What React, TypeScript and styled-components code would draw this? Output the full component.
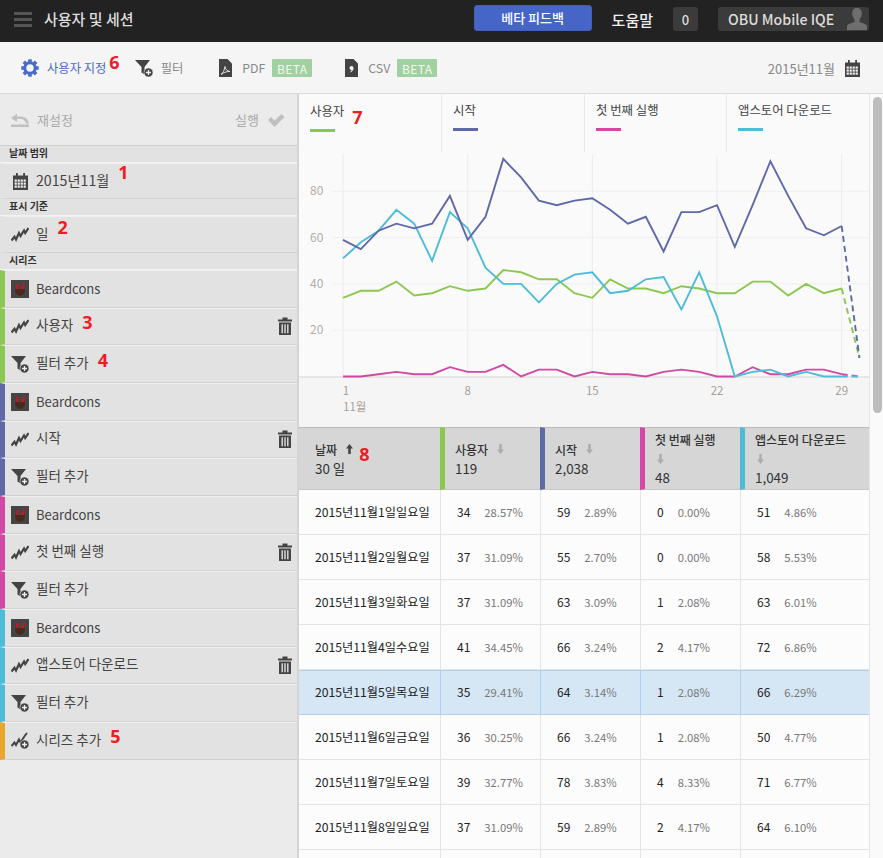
import React from "react";
import styled, { createGlobalStyle } from "styled-components";

const FONT = `"Noto Sans CJK KR", "Noto Sans", sans-serif`;

const Global = createGlobalStyle`
  html, body { margin: 0; padding: 0; height: 858px; overflow: hidden; background: #fafafa; }
  body { font-family: ${FONT}; }
  * { box-sizing: border-box; }
`;

const GREEN = "#8cc751";
const PURPLE = "#5f69a8";
const PINK = "#d148a5";
const CYAN = "#4dbcd9";
const ORANGE = "#e9a62c";

const Page = styled.div`
  width: 883px; height: 858px; overflow: hidden;
  display: flex; flex-direction: column;
`;
const TopBar = styled.header`
  height: 42px; flex: none; background: #222; color: #ddd;
  display: flex; align-items: center; padding: 0 14px;
`;
const Burger = styled.span`
  width: 18px; height: 15px; flex: none; margin-top: -3px;
  border-top: 3px solid #555; border-bottom: 3px solid #555;
  display: flex; align-items: center;
  &::before { content: ""; display: block; width: 100%; height: 3px; background: #555; }
`;
const Title = styled.h1`
  margin: 0 0 0 12px; font-size: 15px; font-weight: 500; color: #ddd; flex: 1; position: relative; top: -3px;
`;
const FeedbackButton = styled.button`
  width: 118px; height: 26px; margin-top: -6px; border: 1px solid #4060b8; border-radius: 3px;
  background: #4566c6; color: #fff; font: 500 13px ${FONT}; padding: 0 0 2px;
`;
const HelpLink = styled.span`
  margin: -4px 20px 0 20px; font-size: 15px; font-weight: 500; color: #eee;
`;
const CountBadge = styled.span`
  width: 25px; height: 24px; margin-top: -4px; border-radius: 3px; background: #3b3b3b;
  color: #ddd; font-size: 13px; font-weight: 500;
  display: flex; align-items: center; justify-content: center;
`;
const UserBox = styled.div`
  width: 151px; height: 24px; margin: -4px 0 0 20px; border-radius: 3px; background: #3b3b3b;
  display: flex; align-items: center; justify-content: space-between; padding: 0 1px 0 10px;
  font-size: 14.2px; font-weight: 500; color: #ddd; white-space: nowrap;
`;

const ToolBar = styled.nav`
  height: 52px; flex: none; background: #f5f5f5; border-bottom: 1px solid #dcdcdc;
  display: flex; align-items: center; padding: 1px 23px 0 21px;
`;
const ToolItem = styled.span<{ $left?: number; $active?: boolean }>`
  display: flex; align-items: center; margin-left: ${(p) => p.$left ?? 0}px;
  font-size: 12.3px; color: ${(p) => (p.$active ? "#4a6bc8" : "#888")};
  white-space: nowrap;
`;
const ToolText = styled.span<{ $left: number }>`
  margin-left: ${(p) => p.$left}px;
`;
const BetaBadge = styled.span`
  margin-left: 7px; width: 40px; height: 18px; border-radius: 1px; background: #a1d1a0; color: #f2f8f0;
  display: flex; align-items: center; justify-content: center; font-size: 12px; letter-spacing: .4px;
`;
const ToolSpacer = styled.span`flex: 1;`;
const DateText = styled.span`
  font-size: 13px; color: #888; margin-right: 10px;
`;

const Body = styled.div`
  flex: 1; display: flex; min-height: 0;
`;
const Side = styled.aside`
  width: 299px; flex: none; background: #ebebeb; border-right: 2px solid #d4d4d4;
  display: flex; flex-direction: column;
`;
const ResetBar = styled.div`
  height: 52px; flex: none; display: flex; align-items: center; justify-content: space-between;
  padding: 0 12px 0 11px; border-bottom: 1px solid #d0d0d0;
  color: #aaa; font-size: 13px;
`;
const ResetGroup = styled.span`
  display: flex; align-items: center; gap: 8px;
`;
const SectionLabel = styled.div`
  height: 17px; flex: none; background: #e2e2e2; border-bottom: 1px solid #f2f2f2;
  padding-left: 9px; font-size: 10px; font-weight: 700; line-height: 13px; color: #333;
`;
const SideRow = styled.div<{ $stripe?: string; $h?: number }>`
  height: ${(p) => p.$h ?? 37.667}px; flex: none; background: #e2e2e2;
  border-bottom: 1px solid #d2d2d2; border-top: 1px solid #efefef;
  border-left: 5px solid ${(p) => p.$stripe ?? "#e2e2e2"};
  display: flex; align-items: center; padding: 0 5px 0 6px;
  font-size: 13.5px; color: #444; white-space: nowrap;
`;
const RowIcon = styled.span`
  width: 18px; height: 18px; flex: none; margin-right: 7px; display: flex; align-items: center; justify-content: center;
`;
const RowLabel = styled.span<{ $size?: number; $top?: number }>`
  flex: 1; position: relative; top: ${(p) => p.$top ?? -2}px; display: flex; align-items: center;
  font-size: ${(p) => p.$size ?? 13.5}px;
`;
const Note = styled.span<{ $left?: number; $up?: number }>`
  position: relative; top: ${(p) => -(p.$up ?? 2)}px; margin-left: ${(p) => p.$left ?? 9}px;
  color: #ee1c25; font: 700 18px "Open Sans", sans-serif; line-height: 1;
`;

const Main = styled.main`
  flex: 1; display: flex; min-width: 0;
`;
const Content = styled.div`
  width: 570px; flex: none; display: flex; flex-direction: column; background: #fafafa;
`;
const Gutter = styled.div`
  flex: 1; background: #fafafa; border-left: 1px solid #e6e6e6; padding: 3px 0 0 3px;
`;
const Thumb = styled.div`
  width: 9px; height: 316px; border-radius: 5px; background: #bdbdbd;
`;
const Tabs = styled.div`
  height: 58px; flex: none; display: flex;
`;
const Tab = styled.div<{ $w: number }>`
  width: ${(p) => p.$w}px; height: 100%; border-right: 1px solid #e8e8e8; padding: 6px 0 0 11px;
  font-size: 12.4px; color: #444; white-space: nowrap; line-height: 20px;
  &:last-child { border-right: none; }
`;
const TabBar = styled.div<{ $c: string }>`
  width: 25px; height: 3px; margin-top: 8px; background: ${(p) => p.$c};
`;
const ChartBox = styled.div`
  height: 275px; flex: none; line-height: 0;
`;

const Grid = styled.div`
  display: grid; grid-template-columns: 141px 100px 100px 100px 129px; flex: none;
`;
const HeadCell = styled.div<{ $stripe?: string }>`
  height: 63px; background: #d6d6d6; border-top: 1px solid #bcbcbc; border-bottom: 1px solid #c6c6c6;
  ${(p) => (p.$stripe ? `border-left: 5px solid ${p.$stripe};` : "")}
  padding-left: ${(p) => (p.$stripe ? 10 : 16)}px;
  font-size: 12px; color: #333; display: flex; flex-direction: column; justify-content: center; line-height: 19px;
`;
const HeadTitle = styled.span<{ $stack?: boolean }>`
  font-weight: 500; font-size: 12px; column-gap: 7px; white-space: nowrap;
  display: flex; align-items: ${(p) => (p.$stack ? "flex-start" : "center")};
  flex-direction: ${(p) => (p.$stack ? "column" : "row")};
`;
const ArrowBox = styled.span`
  height: 19px; display: inline-flex; align-items: center; padding-left: 2px;
`;
const HeadTotal = styled.span`
  font-size: 13.4px; display: flex; align-items: center;
`;
const Cell = styled.div<{ $sel?: boolean; $first?: boolean }>`
  height: 45px; display: flex; align-items: center; gap: 14px; white-space: nowrap;
  background: ${(p) => (p.$sel ? "#d5e6f5" : "#fcfcfc")};
  border-bottom: 1px solid ${(p) => (p.$sel ? "#b0cfee" : "#e4e4e4")};
  ${(p) => (p.$first ? "" : `border-left: 1px solid ${p.$sel ? "#b0cfee" : "#e4e4e4"};`)}
  ${(p) => (p.$sel ? "box-shadow: inset 0 1px 0 #b0cfee;" : "")}
  padding: 0 0 1px 16px;
  font-size: ${(p) => (p.$first ? 12.2 : 12)}px; color: #222;
`;
const Pct = styled.span`
  font-size: 11.3px; color: #777;
`;

/* ---------- icons ---------- */
const Gear = () => (
  <svg width="18" height="18" viewBox="0 0 18 18">
    <circle cx="9" cy="9" r="5.2" fill="none" stroke="#4a6bc8" strokeWidth="3" />
    <g fill="#4a6bc8">
      {[0, 45, 90, 135, 180, 225, 270, 315].map((a) => (
        <rect key={a} x="7.2" y="0.3" width="3.6" height="4" transform={`rotate(${a} 9 9)`} />
      ))}
    </g>
  </svg>
);
const FilterPlus = ({ c = "#444" }: { c?: string }) => (
  <svg width="18" height="18" viewBox="0 0 18 18">
    <path d="M0 1h15L9.500 8v7.500l-3-2V8z" fill={c} />
    <circle cx="13.500" cy="13.500" r="4.500" fill={c} stroke="#e8e8e8" strokeWidth=".6" />
    <path d="M13.500 11v5M11 13.500h5" stroke="#f0f0f0" strokeWidth="1.300" />
  </svg>
);
const Pulse = () => (
  <svg width="18" height="15" viewBox="0 0 18 15">
    <path d="M.5 13.500l3-3.700 1.500 2.700L8 6l1.500 3L13 3.500l1.200 2.500L17.500 1" fill="none" stroke="#444" strokeWidth="2.200" />
  </svg>
);
const SeriesPlus = () => (
  <svg width="18" height="17" viewBox="0 0 18 17">
    <path d="M.5 14l3-3.500L5 13l3-5.500 1.500 3L13 5l1-1.500L16 1" fill="none" stroke="#444" strokeWidth="2" />
    <circle cx="13.500" cy="12.500" r="4.500" fill="#444" stroke="#e8e8e8" strokeWidth=".6" />
    <path d="M13.500 10v5M11 12.500h5" stroke="#f0f0f0" strokeWidth="1.300" />
  </svg>
);
const Calendar = () => (
  <svg width="15" height="17" viewBox="0 0 15 17">
    <path d="M0 2.500h15V17H0z" fill="#444" />
    <path d="M3 0h1.800v3.500H3zM10.200 0H12v3.500h-1.800z" fill="#444" />
    <g fill="#f0f0f0">
      {[6.5, 9.5, 12.5].map((y) =>
        [1.6, 4.6, 7.6, 10.6].map((x) => <rect key={`${x}-${y}`} x={x} y={y} width="2.2" height="2.2" />)
      )}
    </g>
  </svg>
);
const Trash = () => (
  <svg width="14" height="18" viewBox="0 0 14 18">
    <path d="M0 2.500h14v2H0zM4.500 2.500V.6h5v1.900" fill="#444" />
    <path d="M1 5.500h12V18H1z" fill="#444" />
    <path d="M3.500 7.300h1.400v9H3.500zM6.300 7.300h1.400v9H6.300zM9.100 7.300h1.400v9H9.100z" fill="#e2e2e2" />
  </svg>
);
const Undo = () => (
  <svg width="18" height="14" viewBox="0 0 18 14">
    <path d="M0 11.500h18V14H0z" fill="#c0c0c0" />
    <path d="M18 10.500C17 5 12 2.500 6 3.800V.8L0 5l6 4V6.200c4-1 7.500 0 9 4.300z" fill="#c0c0c0" />
  </svg>
);
const Check = () => (
  <svg width="18" height="14" viewBox="0 0 18 14">
    <path d="M1 7l3-3 3.500 3.500L14.500 1 17.500 4 7.500 14z" fill="#c0c0c0" />
  </svg>
);
const PdfIcon = () => (
  <svg width="13" height="18" viewBox="0 0 13 18">
    <path d="M0 0h8.500L13 4.500V18H0z" fill="#444" />
    <path d="M2 15.500c2-1 3.500-4.500 4-8 .5 3 2 4.500 5 5-3-.2-6 .8-9 3z" fill="none" stroke="#f0f0f0" strokeWidth=".9" />
  </svg>
);
const CsvIcon = () => (
  <svg width="13" height="18" viewBox="0 0 13 18">
    <path d="M0 0h8.500L13 4.500V18H0z" fill="#444" />
    <circle cx="6.500" cy="9" r="2" fill="#f0f0f0" />
    <path d="M8.500 9c0 2.500-1.500 4-4 4.500 1.500-1 2-2 2-3z" fill="#f0f0f0" />
  </svg>
);
const Avatar = () => (
  <svg width="22" height="24" viewBox="0 0 22 24">
    <path d="M11 1c3 0 4.800 2 4.800 5.500 0 2.500-1 4.500-2.300 6v2.500c3 1 7 2 7.500 4V23H1v-4c.5-2 4.500-3 7.500-4v-2.500C7.200 11 6.200 9 6.200 6.500 6.200 3 8 1 11 1z" fill="#6e6e6e" />
  </svg>
);
const BeardLogo = () => (
  <svg width="18" height="18" viewBox="0 0 18 18">
    <rect width="18" height="18" fill="#454545" />
    <path d="M4 9h10c0 4-2 7-5 7s-5-3-5-7z" fill="#4a2a1c" />
    <path d="M5 4.500h1.500V9H5zM6.500 4.500H8V6H6.500zM10 6.500h3V9h-3zM12 3h1.500v4H12z" fill="#d3121e" />
  </svg>
);
const SortArrow = ({ up }: { up?: boolean }) => (
  <svg width="7" height="10" viewBox="0 0 7 10">
    <path
      d={up ? "M3.500 0L7 4.500H4.800V10H2.200V4.500H0z" : "M3.500 10L7 5.500H4.800V0H2.200v5.500H0z"}
      fill={up ? "#444" : "#adadad"}
    />
  </svg>
);

/* ---------- chart ---------- */
const DAY0 = 44;
const STEP = 17.81;
const ZERO = 224.5;
const UNIT = 2.315;
const TOP = 2;
const px = (i: number) => DAY0 + i * STEP;
const py = (v: number) => ZERO - v * UNIT;

const SERIES: { c: string; d: number[] }[] = [
  { c: GREEN, d: [34,37,37,41,35,36,39,37,38,46,45,42,42,36,34,42,38,38,36,39,38,36,36,41,41,35,40,36,38,8] },
  { c: PINK, d: [0,0,1,2,1,1,4,2,2,5,0,3,3,0,2,1,1,0,2,3,2,0,0,4,1,1,3,3,1,0] },
  { c: CYAN, d: [51,58,63,72,66,50,71,64,47,40,40,32,40,44,45,36,37,42,43,29,45,26,0,2,3,0,2,0,0,0] },
  { c: PURPLE, d: [59,55,63,66,64,66,78,59,69,94,86,76,74,76,77,72,66,69,54,71,71,74,56,74,93,78,64,61,65,8] },
];

const points = (d: number[]) => d.map((v, i) => `${px(i).toFixed(1)},${py(v).toFixed(1)}`).join(" ");

const Chart = () => (
  <svg width="570" height="275" viewBox="0 0 570 275">
    <rect width="570" height="275" fill="#fafafa" />
    <rect y={ZERO + 1} width="570" height={275 - ZERO} fill="#f5f5f5" />
    {[20, 40, 60, 80].map((v) => (
      <g key={v}>
        <line x1="34" x2="570" y1={py(v)} y2={py(v)} stroke="#efefef" strokeWidth="1" />
        <text x="11" y={py(v) + 4} fontSize="12" fill="#b5aca5" fontFamily={FONT}>{v}</text>
      </g>
    ))}
    {[0, 7, 14, 21, 28].map((i) => (
      <g key={i}>
        <line x1={px(i)} x2={px(i)} y1={TOP} y2={ZERO} stroke="#ececec" strokeWidth="1" />
        <text x={px(i) + (i === 0 ? 3 : 0)} y="243" fontSize="11.5" textAnchor="middle" fill="#a8a09a" fontFamily={FONT}>{i + 1}</text>
      </g>
    ))}
    <text x={DAY0} y="259" fontSize="11.5" fill="#a8a09a" fontFamily={FONT}>11월</text>
    <line x1="0" x2="570" y1={ZERO + .5} y2={ZERO + .5} stroke="#d2d2d2" />
    {SERIES.map((s) => (
      <g key={s.c} fill="none" stroke={s.c} strokeWidth="1.9">
        <polyline points={points(s.d.slice(0, 29))} strokeLinejoin="miter" />
        <line x1={px(28)} y1={py(s.d[28])} x2={px(29)} y2={py(s.d[29])} strokeDasharray="6 4" />
      </g>
    ))}
  </svg>
);

/* ---------- data ---------- */
const ROWS: string[][] = [
  ["2015년11월1일일요일","34","28.57%","59","2.89%","0","0.00%","51","4.86%"],
  ["2015년11월2일월요일","37","31.09%","55","2.70%","0","0.00%","58","5.53%"],
  ["2015년11월3일화요일","37","31.09%","63","3.09%","1","2.08%","63","6.01%"],
  ["2015년11월4일수요일","41","34.45%","66","3.24%","2","4.17%","72","6.86%"],
  ["2015년11월5일목요일","35","29.41%","64","3.14%","1","2.08%","66","6.29%"],
  ["2015년11월6일금요일","36","30.25%","66","3.24%","1","2.08%","50","4.77%"],
  ["2015년11월7일토요일","39","32.77%","78","3.83%","4","8.33%","71","6.77%"],
  ["2015년11월8일일요일","37","31.09%","59","2.89%","2","4.17%","64","6.10%"],
  ["","","","","","","","",""],
];

const GROUPS = [
  { c: GREEN, name: "사용자", n1: "3", n2: "4" },
  { c: PURPLE, name: "시작" },
  { c: PINK, name: "첫 번째 실행" },
  { c: CYAN, name: "앱스토어 다운로드" },
];
const TOTALS = [
  { c: GREEN, name: "사용자", v: "119" },
  { c: PURPLE, name: "시작", v: "2,038" },
  { c: PINK, name: "첫 번째 실행", v: "48", stack: true },
  { c: CYAN, name: "앱스토어 다운로드", v: "1,049", stack: true },
];

export default function App() {
  return (
    <Page>
      <Global />
      <TopBar>
        <Burger />
        <Title>사용자 및 세션</Title>
        <FeedbackButton>베타 피드백</FeedbackButton>
        <HelpLink>도움말</HelpLink>
        <CountBadge>0</CountBadge>
        <UserBox>OBU Mobile IQE<Avatar /></UserBox>
      </TopBar>
      <ToolBar>
        <ToolItem $active><Gear /><ToolText $left={8}>사용자 지정</ToolText><Note $left={3} $up={6}>6</Note></ToolItem>
        <ToolItem $left={15}><FilterPlus /><ToolText $left={8}>필터</ToolText></ToolItem>
        <ToolItem $left={36}><PdfIcon /><ToolText $left={10}>PDF</ToolText><BetaBadge>BETA</BetaBadge></ToolItem>
        <ToolItem $left={33}><CsvIcon /><ToolText $left={10}>CSV</ToolText><BetaBadge>BETA</BetaBadge></ToolItem>
        <ToolSpacer />
        <DateText>2015년11월</DateText>
        <Calendar />
      </ToolBar>
      <Body>
        <Side>
          <ResetBar>
            <ResetGroup><Undo />재설정</ResetGroup>
            <ResetGroup>실행<Check /></ResetGroup>
          </ResetBar>
          <SectionLabel>날짜 범위</SectionLabel>
          <SideRow $h={36}><RowIcon><Calendar /></RowIcon><RowLabel $size={14.2} $top={-1}>2015년11월<Note $up={8}>1</Note></RowLabel></SideRow>
          <SectionLabel>표시 기준</SectionLabel>
          <SideRow $h={37}><RowIcon><Pulse /></RowIcon><RowLabel>일<Note $up={6}>2</Note></RowLabel></SideRow>
          <SectionLabel>시리즈</SectionLabel>
          {GROUPS.map((g) => (
            <React.Fragment key={g.c}>
              <SideRow $stripe={g.c}><RowIcon><BeardLogo /></RowIcon><RowLabel $size={13.1} $top={0}>Beardcons</RowLabel></SideRow>
              <SideRow $stripe={g.c}>
                <RowIcon><Pulse /></RowIcon>
                <RowLabel>{g.name}{g.n1 && <Note>{g.n1}</Note>}</RowLabel>
                <Trash />
              </SideRow>
              <SideRow $stripe={g.c}>
                <RowIcon><FilterPlus /></RowIcon>
                <RowLabel>필터 추가{g.n2 && <Note>{g.n2}</Note>}</RowLabel>
              </SideRow>
            </React.Fragment>
          ))}
          <SideRow $stripe={ORANGE}><RowIcon><SeriesPlus /></RowIcon><RowLabel>시리즈 추가<Note $up={3}>5</Note></RowLabel></SideRow>
        </Side>
        <Main>
          <Content>
            <Tabs>
              <Tab $w={143}>사용자<Note $left={8} $up={-8}>7</Note><TabBar $c={GREEN} /></Tab>
              <Tab $w={143}>시작<TabBar $c={PURPLE} /></Tab>
              <Tab $w={142}>첫 번째 실행<TabBar $c={PINK} /></Tab>
              <Tab $w={142}>앱스토어 다운로드<TabBar $c={CYAN} /></Tab>
            </Tabs>
            <ChartBox><Chart /></ChartBox>
            <Grid>
              <HeadCell>
                <HeadTitle>날짜<ArrowBox><SortArrow up /></ArrowBox></HeadTitle>
                <HeadTotal>30 일<Note $left={14} $up={14}>8</Note></HeadTotal>
              </HeadCell>
              {TOTALS.map((t) => (
                <HeadCell key={t.c} $stripe={t.c}>
                  <HeadTitle $stack={t.stack}>{t.name}<ArrowBox><SortArrow /></ArrowBox></HeadTitle>
                  <HeadTotal>{t.v}</HeadTotal>
                </HeadCell>
              ))}
              {ROWS.map((r, i) => {
                const sel = i === 4;
                return (
                  <React.Fragment key={i}>
                    <Cell $first $sel={sel}>{r[0]}</Cell>
                    {[1, 3, 5, 7].map((k) => (
                      <Cell key={k} $sel={sel}>{r[k]}<Pct>{r[k + 1]}</Pct></Cell>
                    ))}
                  </React.Fragment>
                );
              })}
            </Grid>
          </Content>
          <Gutter><Thumb /></Gutter>
        </Main>
      </Body>
    </Page>
  );
}
